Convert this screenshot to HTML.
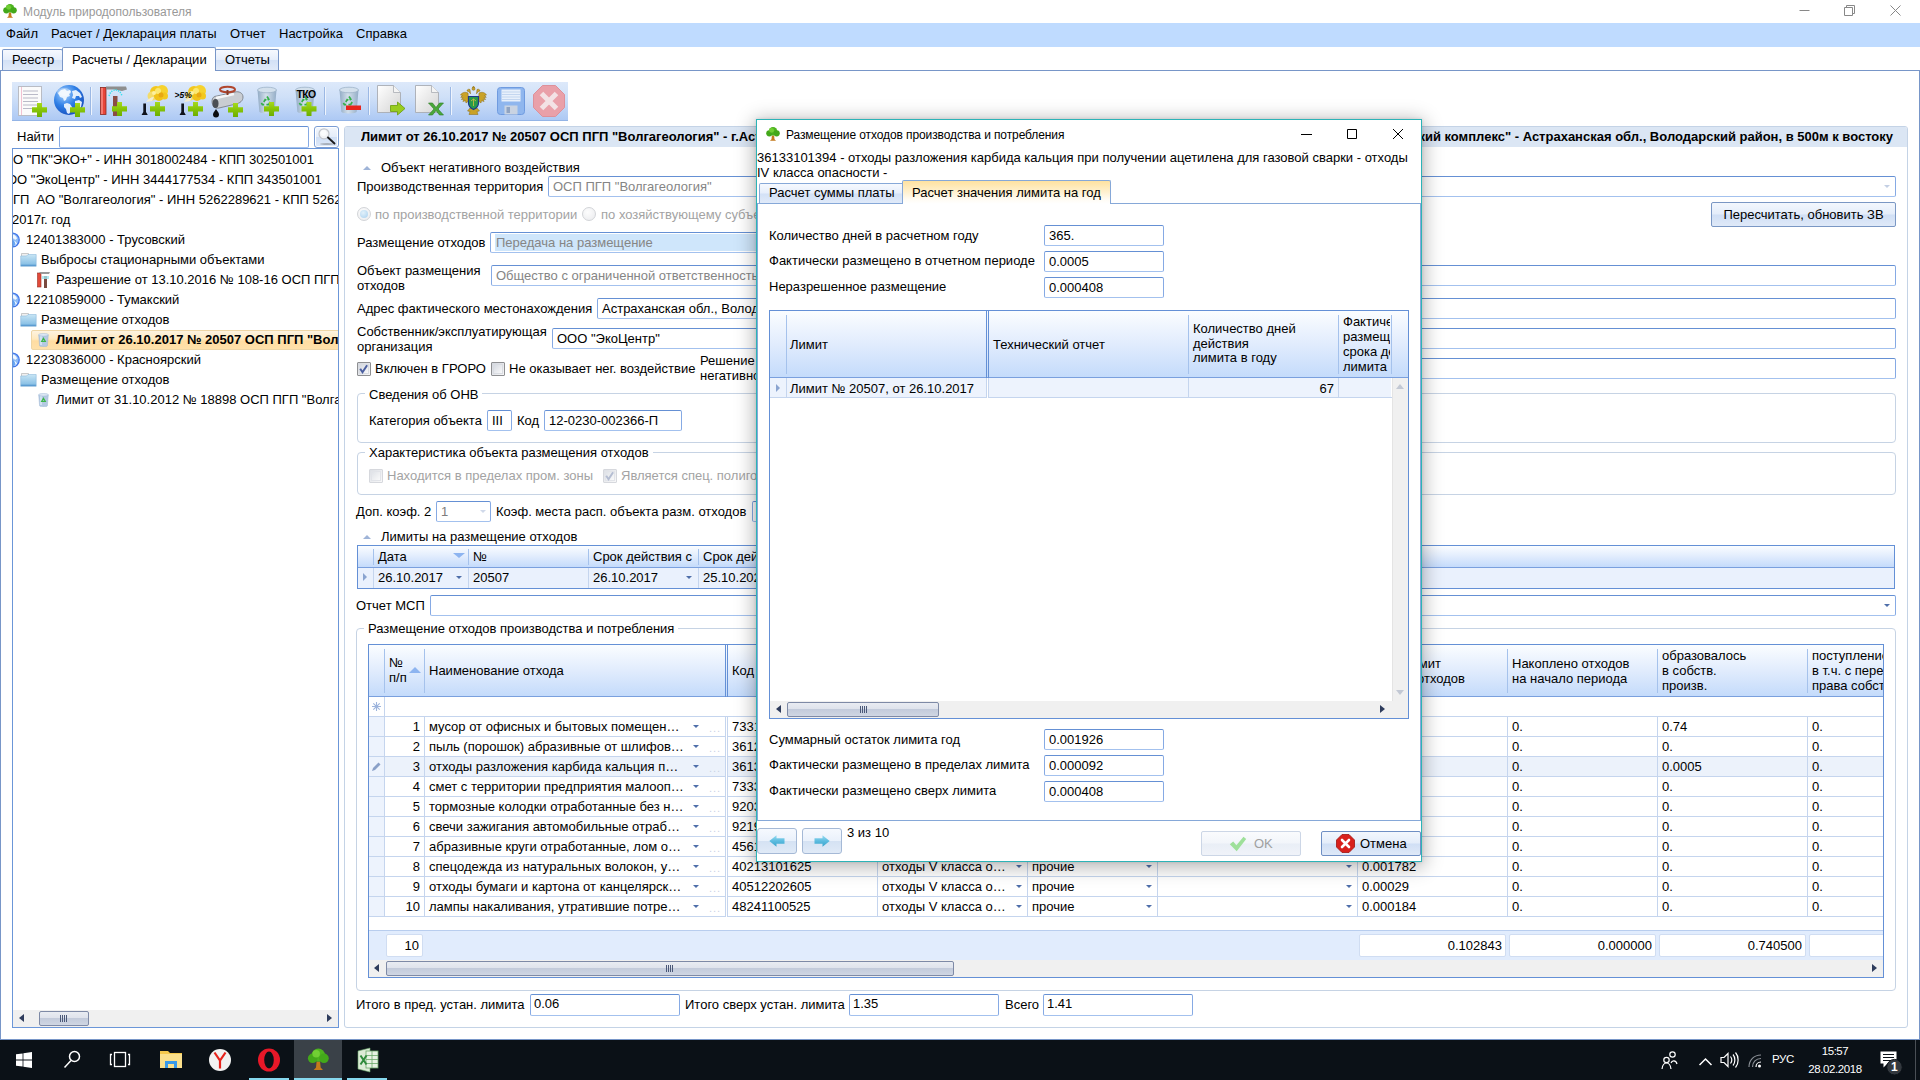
<!DOCTYPE html><html lang="ru"><head><meta charset="utf-8"><title>Модуль природопользователя</title><style>
*{box-sizing:border-box;margin:0;padding:0}
html,body{width:1920px;height:1080px;overflow:hidden;background:#fff}
body{font-family:"Liberation Sans",sans-serif;font-size:13px;color:#000;position:relative;line-height:15px}
.a{position:absolute;white-space:nowrap}
.t{position:absolute;white-space:nowrap;line-height:15px}
.g{color:#a3a3a3}.g2{color:#858585}
.in{position:absolute;height:21px;border:1px solid #86aae4;border-top-color:#6590d4;border-bottom-color:#a3c1ee;border-radius:2px;background:#fff;white-space:nowrap;overflow:hidden;padding:2px 0 0 4px;line-height:15px}
.grp{position:absolute;border:1px solid #c6d3e4;border-radius:4px}
.grp>span{position:absolute;top:-8px;left:7px;background:#fff;padding:0 4px;line-height:15px;white-space:nowrap}
.hdr{position:absolute;background:linear-gradient(#fbfdff 0%,#e1ecfd 50%,#c4dbfb 100%);border-bottom:1px solid #7aa0de}
.vs{position:absolute;width:1px;background:#a5c2ec}
.hl{position:absolute;height:1px;background:#c5d5ee}
.vl{position:absolute;width:1px;background:#c5d5ee}
.btn{position:absolute;border:1px solid #7a97c4;border-radius:2px;background:linear-gradient(#f3f7fd 0%,#e4edfa 48%,#d0dff5 52%,#dfe9f8 100%);text-align:center}
.cb{position:absolute;width:14px;height:14px;border:1px solid #8e8f92;background:linear-gradient(135deg,#d2d6dd,#f6f6f7);border-radius:1px}
.cb:after{content:"";position:absolute;left:1px;top:1px;right:1px;bottom:1px;border:1px solid #d9dce2;background:linear-gradient(135deg,#d6dae1,#f8f8f9)}
.cb.dis{border-color:#c9ccd2;opacity:.75}
.tri{position:absolute;width:0;height:0;border-left:4px solid transparent;border-right:4px solid transparent}
.dd{position:absolute;width:0;height:0;border-left:3px solid transparent;border-right:3px solid transparent;border-top:3px solid #4f6faa}
</style></head><body>
<div class="a" style="left:0px;top:0px;width:1920px;height:23px;background:#fff"></div>
<svg class="a" style="left:2px;top:3px" width="16" height="16" viewBox="0 0 17 17"><path d="M7.3 10h2.4l.4 4.2 1.6 1.6H5.3l1.6-1.6z" fill="#c47a1c"/><circle cx="8.5" cy="5.6" r="4.6" fill="#4db31f"/><circle cx="4.6" cy="7.8" r="3.3" fill="#43a81a"/><circle cx="12.4" cy="7.8" r="3.3" fill="#43a81a"/><circle cx="7" cy="4.6" r="2.6" fill="#7ad63a" opacity=".8"/></svg>
<div class="t" style="left:23px;top:5px;font-size:12px;color:#999">Модуль природопользователя</div>
<svg class="a" style="left:1790px;top:0" width="120" height="22" viewBox="0 0 120 22"><g stroke="#888" stroke-width="1" fill="none"><path d="M9.5 10.5h10"/><path d="M54.5 7.5h8v8h-8zM56.5 7.5v-2h8v8h-2"/><path d="M100.5 5.5l10 10M110.5 5.5l-10 10"/></g></svg>
<div class="a" style="left:0px;top:23px;width:1920px;height:24px;background:#bfdbff"></div>
<div class="t" style="left:6px;top:26px;">Файл</div>
<div class="t" style="left:51px;top:26px;">Расчет / Декларация платы</div>
<div class="t" style="left:230px;top:26px;">Отчет</div>
<div class="t" style="left:279px;top:26px;">Настройка</div>
<div class="t" style="left:356px;top:26px;">Справка</div>
<div class="a" style="left:0px;top:70px;width:1920px;height:970px;border:1px solid #7896c8;background:#fff"></div>
<div class="a" style="left:2px;top:49px;width:61px;height:21px;background:linear-gradient(#f6f9fe 0%,#e6eefb 48%,#d3e1f6 52%,#e0eaf9 100%);border:1px solid #7896c8;border-bottom:none;border-radius:2px 2px 0 0"></div>
<div class="a" style="left:215px;top:49px;width:64px;height:21px;background:linear-gradient(#f6f9fe 0%,#e6eefb 48%,#d3e1f6 52%,#e0eaf9 100%);border:1px solid #7896c8;border-bottom:none;border-radius:2px 2px 0 0"></div>
<div class="a" style="left:62px;top:47px;width:154px;height:24px;background:#fff;border:1px solid #7896c8;border-bottom:none;border-radius:2px 2px 0 0"></div>
<div class="t" style="left:12px;top:52px;">Реестр</div>
<div class="t" style="left:72px;top:52px;">Расчеты / Декларации</div>
<div class="t" style="left:225px;top:52px;">Отчеты</div>
<div class="a" style="left:12px;top:82px;width:556px;height:39px;background:linear-gradient(#dde9fa 0%,#cfe0f8 40%,#adc9f4 100%);border-bottom:1px solid #93b4e6"></div>
<svg class="a" style="left:12px;top:82px" width="556" height="39" viewBox="12 82 556 39"><defs><linearGradient id="gb2" x1="0" y1="0" x2="1" y2="0"><stop offset="0" stop-color="#8ea8c2"/><stop offset=".45" stop-color="#d3dfea"/><stop offset="1" stop-color="#90aac4"/></linearGradient><linearGradient id="gp" x1="0" y1="0" x2="0" y2="1"><stop offset="0" stop-color="#a6d91c"/><stop offset=".5" stop-color="#86c408"/><stop offset="1" stop-color="#6cae00"/></linearGradient><linearGradient id="gb" x1="0" y1="0" x2="0" y2="1"><stop offset="0" stop-color="#cfe0f2"/><stop offset="1" stop-color="#8fb0d2"/></linearGradient><radialGradient id="gg" cx=".35" cy=".3" r=".8"><stop offset="0" stop-color="#a8d4ff"/><stop offset=".5" stop-color="#2f7fe6"/><stop offset="1" stop-color="#1448b8"/></radialGradient><linearGradient id="gd" x1="0" y1="0" x2="1" y2="1"><stop offset="0" stop-color="#ffffff"/><stop offset="1" stop-color="#d4d4d4"/></linearGradient></defs><path d="M90.5 87v28" stroke="#9bb8e4" stroke-width="1"/><path d="M91.5 87v28" stroke="#eef4fd" stroke-width="1"/><path d="M324.5 87v28" stroke="#9bb8e4" stroke-width="1"/><path d="M325.5 87v28" stroke="#eef4fd" stroke-width="1"/><path d="M368.5 87v28" stroke="#9bb8e4" stroke-width="1"/><path d="M369.5 87v28" stroke="#eef4fd" stroke-width="1"/><path d="M450.5 87v28" stroke="#9bb8e4" stroke-width="1"/><path d="M451.5 87v28" stroke="#eef4fd" stroke-width="1"/><rect x="18.5" y="86.500" width="23" height="29" fill="#fbfbfb" stroke="#b9bcc4" stroke-width="1"/><path d="M21.5 87v28" stroke="#f0b4c8" stroke-width=".8"/><path d="M23 91h15" stroke="#aab" stroke-width=".8"/><path d="M23 94.5h15" stroke="#aab" stroke-width=".8"/><path d="M23 98h15" stroke="#aab" stroke-width=".8"/><path d="M23 101.5h15" stroke="#aab" stroke-width=".8"/><path d="M23 105h15" stroke="#aab" stroke-width=".8"/><path d="M23 108.5h15" stroke="#aab" stroke-width=".8"/><path d="M37 103h5v4.300h5v5.200h-5v4.500h-5v-4.500h-5v-5.200h5z" fill="url(#gp)"/><circle cx="69" cy="100" r="15" fill="url(#gg)"/><path d="M58 93l3-3 4-1 2 2 3-1 1 2-2 2 1 2-3 1-1 3-2 1-1-3-3-1-1-2zM64 104l3-1 3 1 2 3-1 4-2 3-2-1-1-4-2-2zM72 91l4-1 4 3 2 4-2 1-1-2-3 0-1 3-3-1 1-3zM75 101l4-1 3 2-1 5-3 3-3-3z" fill="#f2f8fe" opacity=".92"/><ellipse cx="64" cy="92" rx="7" ry="4" fill="#fff" opacity=".35"/><path d="M75 103h5v4.300h5v5.200h-5v4.500h-5v-4.500h-5v-5.200h5z" fill="url(#gp)"/><rect x="100.5" y="87.500" width="5.500" height="27" fill="#e8453a" stroke="#8c2a22" stroke-width=".8"/><path d="M102 88v26" stroke="#ffb0a8" stroke-width="1"/><path d="M106 86.500h20l1 3-5 1.500-8-1.500h-8z" fill="#8e8e8e"/><rect x="113" y="96" width="4.500" height="20" fill="#8a4c44"/><path d="M109 96c1-4 4-6 6.500-6s5.500 2 6.500 6" fill="none" stroke="#32e0f0" stroke-width="1.500" stroke-dasharray="1.200 1.200"/><path d="M117 102h5v4.300h5v5.200h-5v4.500h-5v-4.500h-5v-5.200h5z" fill="url(#gp)"/><g transform="translate(0,0)"><circle cx="156" cy="92" r="6" fill="#f3c81e"/><circle cx="162" cy="91" r="6" fill="#f6d22e"/><circle cx="152" cy="96" r="4.500" fill="#f4dc6a"/><circle cx="159" cy="96" r="5" fill="#f0c21a"/><circle cx="164.500" cy="96" r="3.500" fill="#f3c81e"/><circle cx="158" cy="91" r="3" fill="#fbe872"/><circle cx="161" cy="95" r="2.500" fill="#e8a812"/><circle cx="154" cy="93" r="2" fill="#fdf0a0"/><path d="M146 102c2-3 5-5 8-5l-2 4c-2 0-4 1-6 1z" fill="#f2ecd2"/></g><path d="M143.300 103.500h2.700v8.500l1.800 3h-6.300l1.800-3z" fill="#10131c"/><path d="M155 102h5v4.300h5v5.200h-5v4.500h-5v-4.500h-5v-5.200h5z" fill="url(#gp)"/><g transform="translate(38,0)"><circle cx="156" cy="92" r="6" fill="#f3c81e"/><circle cx="162" cy="91" r="6" fill="#f6d22e"/><circle cx="152" cy="96" r="4.500" fill="#f4dc6a"/><circle cx="159" cy="96" r="5" fill="#f0c21a"/><circle cx="164.500" cy="96" r="3.500" fill="#f3c81e"/><circle cx="158" cy="91" r="3" fill="#fbe872"/><circle cx="161" cy="95" r="2.500" fill="#e8a812"/><circle cx="154" cy="93" r="2" fill="#fdf0a0"/><path d="M146 102c2-3 5-5 8-5l-2 4c-2 0-4 1-6 1z" fill="#f2ecd2"/></g><text x="174.500" y="97.500" font-family="Liberation Sans,sans-serif" font-size="8.500" font-weight="bold" font-style="italic" fill="#000">&gt;5%</text><path d="M181.300 103.500h2.700v8.500l1.800 3h-6.300l1.800-3z" fill="#10131c"/><path d="M193 102h5v4.300h5v5.200h-5v4.500h-5v-4.500h-5v-5.200h5z" fill="url(#gp)"/><path d="M212 101c0-3 2-5 5-5l18-4c4-1 8 1 8 5s-3 6-7 7l-17 4c-4 1-7-2-7-7z" fill="#c9cdd2" stroke="#70757c" stroke-width=".8"/><path d="M216 98l18-4" stroke="#f4f6f8" stroke-width="2.500"/><ellipse cx="215.500" cy="103.500" rx="3" ry="4.500" fill="#4a4e55"/><ellipse cx="227.500" cy="89.500" rx="7.500" ry="2.800" fill="none" stroke="#b0462e" stroke-width="2"/><path d="M227.500 90v5" stroke="#8a3a28" stroke-width="2"/><path d="M216 109c2 3 3 4 3 5.500a3 3 0 0 1-6 0c0-1.500 1-2.500 3-5.500z" fill="#0b0c10"/><path d="M233 103h5v4.300h5v5.200h-5v4.500h-5v-4.500h-5v-5.200h5z" fill="url(#gp)"/><path d="M257.5 90l1.800 21.500c0 2.600 15.400 2.600 15.400 0l1.800-21.500z" fill="url(#gb2)" opacity=".95"/><ellipse cx="267" cy="90" rx="9.500" ry="2.800" fill="#d3e0ec" stroke="#9db3c8" stroke-width=".8"/><path d="M267 96.500l1.800 2.800-1.200.7M270.2 102l-1.600 2.600h-2.200M263.8 102l1.400-2.400 1.200.6M264.2 104.600h-1.800l-1-1.800" fill="none" stroke="#35b04a" stroke-width="1.700"/><path d="M269 102h5v4.300h5v5.200h-5v4.500h-5v-4.500h-5v-5.200h5z" fill="url(#gp)"/><path d="M295.5 90l1.800 21.500c0 2.600 15.400 2.600 15.400 0l1.800-21.500z" fill="url(#gb2)" opacity=".95"/><ellipse cx="305" cy="90" rx="9.500" ry="2.800" fill="#d3e0ec" stroke="#9db3c8" stroke-width=".8"/><path d="M305 96.500l1.800 2.800-1.200.7M308.2 102l-1.600 2.600h-2.200M301.8 102l1.400-2.400 1.200.6M302.2 104.600h-1.800l-1-1.800" fill="none" stroke="#35b04a" stroke-width="1.700"/><path d="M306.5 102h5v4.300h5v5.200h-5v4.500h-5v-4.500h-5v-5.200h5z" fill="url(#gp)"/><text x="296.500" y="98" font-family="Liberation Sans,sans-serif" font-size="10.500" font-weight="bold" fill="#000" letter-spacing="-.7">ТКО</text><path d="M339.5 90l1.800 21.500c0 2.600 15.400 2.600 15.400 0l1.800-21.500z" fill="url(#gb2)" opacity=".95"/><ellipse cx="349" cy="90" rx="9.500" ry="2.800" fill="#d3e0ec" stroke="#9db3c8" stroke-width=".8"/><path d="M349 96.500l1.800 2.800-1.200.7M352.2 102l-1.600 2.600h-2.200M345.8 102l1.400-2.400 1.200.6M346.2 104.600h-1.800l-1-1.800" fill="none" stroke="#35b04a" stroke-width="1.700"/><rect x="346" y="105.500" width="15" height="4.500" fill="#e8251c"/><path d="M377.5 85.500h16l7 7v20h-23z" fill="url(#gd)" stroke="#a8acb2" stroke-width=".9"/><path d="M393.5 85.500v7h7" fill="#f4f4f4" stroke="#a8acb2" stroke-width=".8"/><path d="M390.500 105.500h7v-3.500l7.500 6.500-7.500 6.500v-3.500h-7z" fill="#98cc1e" stroke="#6a9c0a" stroke-width=".8"/><path d="M415.5 85.500h16l7 7v20h-23z" fill="url(#gd)" stroke="#a8acb2" stroke-width=".9"/><path d="M431.5 85.500v7h7" fill="#f4f4f4" stroke="#a8acb2" stroke-width=".8"/><path d="M428.500 103l4 0 3.500 4.500 3.500-4.500h4l-5.500 6 5.500 6h-4l-3.500-4.500-3.500 4.500h-4l5.500-6z" fill="#4aa83a" stroke="#2a7a22" stroke-width=".6"/><g fill="#c9a227" stroke="#8a6a10" stroke-width=".5"><path d="M473.500 86l1.200 1.800h-2.400z"/><circle cx="473.500" cy="88.800" r="1.500"/><path d="M470 89.500c-1.500-.8-3 0-3 1.500l2 .8 1.500 2zM477 89.500c1.500-.8 3 0 3 1.500l-2 .8-1.500 2z"/><path d="M468 93c-3-1.500-6-.5-7.500 2l2 .5-1.800 1.800 2.200.2-1.500 2 2.500-.2-1 2.200 2.600-.8.500 2.300 2.500-2zM479 93c3-1.500 6-.5 7.500 2l-2 .5 1.800 1.800-2.200.2 1.500 2-2.500-.2 1 2.200-2.600-.8-.5 2.300-2.500-2z"/><path d="M470 108l-2.500 3 2.500.5-1 3h9l-1-3 2.500-.5-2.500-3z"/></g><path d="M468.500 96.500h10v6.500c0 3-2.200 5.200-5 6.500-2.800-1.300-5-3.500-5-6.500z" fill="#2a9a48" stroke="#1b3a8a" stroke-width="1.200"/><path d="M473.500 99v7M471 101l2.500-2 2.500 2" stroke="#d8c040" stroke-width=".8" fill="none"/><rect x="497.500" y="87.500" width="27" height="27" rx="3" fill="#8fb6ee" stroke="#6f9be0" stroke-width="1"/><rect x="501.500" y="89.500" width="19" height="12" fill="#e8f0fb"/><path d="M502 92h18M502 94.500h18M502 97h18M502 99.500h18" stroke="#b9cfee" stroke-width=".8"/><rect x="504.500" y="105.500" width="13" height="9" fill="#c9d3e2"/><rect x="506.500" y="107" width="3.500" height="6" fill="#8fa3c2"/><path d="M542.500 85.500h13l9 9v13l-9 9h-13l-9-9v-13z" fill="#e9a0a9" stroke="#dd909a" stroke-width="1"/><path d="M541.500 93.500l15 15M556.500 93.500l-15 15" stroke="#f3e2e5" stroke-width="5"/></svg>
<div class="t" style="left:17px;top:129px;">Найти</div>
<div class="in" style="left:59px;top:126px;width:250px;height:22px;"></div>
<div class="btn" style="left:314px;top:126px;width:25px;height:22px;border-color:#7b9dd4;border-radius:3px;box-shadow:inset 0 0 0 1px #fff"></div>
<svg class="a" style="left:317px;top:127px" width="20" height="19" viewBox="0 0 20 19"><ellipse cx="10" cy="17" rx="7" ry=".8" fill="#555" opacity=".5"/><circle cx="7" cy="6.800" r="5" fill="#f2f3f5" stroke="#c2c5ca" stroke-width="1.200"/><circle cx="6.500" cy="6" r="3" fill="#fff" opacity=".7"/><path d="M11 10.500l6.500 6" stroke="#1c1c1c" stroke-width="1.900" stroke-linecap="round"/></svg>
<div class="a" style="left:12px;top:148px;width:327px;height:880px;border:1px solid #6b96d8;background:#fff;overflow:hidden">
<div class="t" style="left:0px;top:3px;">О "ПК"ЭКО+" - ИНН 3018002484 - КПП 302501001</div>
<div class="t" style="left:-6px;top:23px;">ОО "ЭкоЦентр" - ИНН 3444177534 - КПП 343501001</div>
<div class="t" style="left:0px;top:43px;">ГП&nbsp; АО "Волгагеология" - ИНН 5262289621 - КПП 5262</div>
<div class="t" style="left:-1px;top:63px;">2017г. год</div>
<svg class="a" style="left:-9px;top:83px" width="16" height="16" viewBox="0 0 16 16"><circle cx="8.2" cy="8" r="7" fill="#8ebcf6" stroke="#3f74ea" stroke-width="1.300"/><path d="M9 2.500c2 .5 3.500 2 4 4l-2 1.500-1-1.500-2 .5-.5-2zM9.500 9l2 .5 1.500 2-2 2.500-2-1.500z" fill="#f4f9ff"/><path d="M8.500 8c2 1 3 3 3 5l-2 1c-1-2-1-4-1-6z" fill="#2f86f0" opacity=".7"/></svg>
<div class="t" style="left:13px;top:83px;">12401383000 - Трусовский</div>
<svg class="a" style="left:7px;top:103px" width="17" height="15" viewBox="0 0 17 15"><defs><linearGradient id="fg5" x1="0" y1="0" x2="0" y2="1"><stop offset="0" stop-color="#c9e6f5"/><stop offset=".8" stop-color="#8cc2e6"/><stop offset="1" stop-color="#3f87c6"/></linearGradient></defs><path d="M1.500 1.500h7v3h-7z" fill="#f0f0f0" stroke="#b4b4b4" stroke-width=".7"/><path d="M.700 4l5.800 0 1.500-1.500h8.200v11.800H.7z" fill="url(#fg5)" stroke="#7fb0d8" stroke-width=".5"/></svg>
<div class="t" style="left:28px;top:103px;">Выбросы стационарными объектами</div>
<svg class="a" style="left:23px;top:122px" width="16" height="17" viewBox="0 0 16 17"><rect x="1.5" y="2" width="3.5" height="14" fill="#e24a3a" stroke="#9c2d22" stroke-width=".6"/><rect x="8" y="5" width="3" height="12" fill="#7a4a40"/><path d="M3 1h11l-1 2H5z" fill="#999"/><path d="M6 5h7v3H6z" fill="#9fe4ee" opacity=".8"/></svg>
<div class="t" style="left:43px;top:123px;">Разрешение от 13.10.2016 № 108-16 ОСП ПГП</div>
<svg class="a" style="left:-9px;top:143px" width="16" height="16" viewBox="0 0 16 16"><circle cx="8.2" cy="8" r="7" fill="#8ebcf6" stroke="#3f74ea" stroke-width="1.300"/><path d="M9 2.500c2 .5 3.500 2 4 4l-2 1.500-1-1.500-2 .5-.5-2zM9.500 9l2 .5 1.500 2-2 2.500-2-1.500z" fill="#f4f9ff"/><path d="M8.500 8c2 1 3 3 3 5l-2 1c-1-2-1-4-1-6z" fill="#2f86f0" opacity=".7"/></svg>
<div class="t" style="left:13px;top:143px;">12210859000 - Тумакский</div>
<svg class="a" style="left:7px;top:163px" width="17" height="15" viewBox="0 0 17 15"><defs><linearGradient id="fg8" x1="0" y1="0" x2="0" y2="1"><stop offset="0" stop-color="#c9e6f5"/><stop offset=".8" stop-color="#8cc2e6"/><stop offset="1" stop-color="#3f87c6"/></linearGradient></defs><path d="M1.500 1.500h7v3h-7z" fill="#f0f0f0" stroke="#b4b4b4" stroke-width=".7"/><path d="M.700 4l5.800 0 1.500-1.500h8.200v11.800H.7z" fill="url(#fg8)" stroke="#7fb0d8" stroke-width=".5"/></svg>
<div class="t" style="left:28px;top:163px;">Размещение отходов</div>
<div class="a" style="left:18px;top:181px;width:320px;height:20px;border:1px solid #eed6a6;border-radius:2px;background:linear-gradient(#fdf3e0 0%,#ffe9be 45%,#ffdda2 55%,#ffe1aa 100%)"></div>
<svg class="a" style="left:25px;top:184px" width="11" height="14" viewBox="0 0 11 14"><path d="M.700 1.800h9.600l-.9 11c0 1.200-7.800 1.200-7.800 0z" fill="#b4c9e2" stroke="#9db6d4" stroke-width=".5"/><path d="M3 3v9" stroke="#dbe7f4" stroke-width="1.500"/><ellipse cx="5.500" cy="1.800" rx="4.800" ry="1.300" fill="#dde8f4" stroke="#9db6d4" stroke-width=".5"/><path d="M5.500 5.200l1.900 3.200h-3.800z" fill="none" stroke="#3db64a" stroke-width="1.100"/></svg>
<div class="t" style="left:43px;top:183px;font-weight:bold;">Лимит от 26.10.2017 № 20507 ОСП ПГП "Волга</div>
<svg class="a" style="left:-9px;top:203px" width="16" height="16" viewBox="0 0 16 16"><circle cx="8.2" cy="8" r="7" fill="#8ebcf6" stroke="#3f74ea" stroke-width="1.300"/><path d="M9 2.500c2 .5 3.500 2 4 4l-2 1.500-1-1.500-2 .5-.5-2zM9.500 9l2 .5 1.500 2-2 2.500-2-1.500z" fill="#f4f9ff"/><path d="M8.500 8c2 1 3 3 3 5l-2 1c-1-2-1-4-1-6z" fill="#2f86f0" opacity=".7"/></svg>
<div class="t" style="left:13px;top:203px;">12230836000 - Красноярский</div>
<svg class="a" style="left:7px;top:223px" width="17" height="15" viewBox="0 0 17 15"><defs><linearGradient id="fg11" x1="0" y1="0" x2="0" y2="1"><stop offset="0" stop-color="#c9e6f5"/><stop offset=".8" stop-color="#8cc2e6"/><stop offset="1" stop-color="#3f87c6"/></linearGradient></defs><path d="M1.500 1.500h7v3h-7z" fill="#f0f0f0" stroke="#b4b4b4" stroke-width=".7"/><path d="M.700 4l5.800 0 1.500-1.500h8.200v11.800H.7z" fill="url(#fg11)" stroke="#7fb0d8" stroke-width=".5"/></svg>
<div class="t" style="left:28px;top:223px;">Размещение отходов</div>
<svg class="a" style="left:25px;top:244px" width="11" height="14" viewBox="0 0 11 14"><path d="M.700 1.800h9.600l-.9 11c0 1.200-7.800 1.200-7.800 0z" fill="#b4c9e2" stroke="#9db6d4" stroke-width=".5"/><path d="M3 3v9" stroke="#dbe7f4" stroke-width="1.500"/><ellipse cx="5.500" cy="1.800" rx="4.800" ry="1.300" fill="#dde8f4" stroke="#9db6d4" stroke-width=".5"/><path d="M5.500 5.200l1.900 3.200h-3.800z" fill="none" stroke="#3db64a" stroke-width="1.100"/></svg>
<div class="t" style="left:43px;top:243px;">Лимит от 31.10.2012 № 18898 ОСП ПГП "Волга</div>
<div class="a" style="left:0;top:861px;width:325px;height:17px;background:#f0f0f0"></div>
<div class="a" style="left:26px;top:862px;width:50px;height:15px;border:1px solid #7e8aa6;border-radius:2px;background:linear-gradient(#e9ecf2 0%,#dfe3ec 45%,#c3cbdb 50%,#cfd6e3 100%)"></div>
<div class="a" style="left:47px;top:866px;width:7px;height:7px;background:repeating-linear-gradient(90deg,#4a5878 0 1px,transparent 1px 2px)"></div>
<div class="a" style="left:6px;top:865px;width:0;height:0;border-top:4px solid transparent;border-bottom:4px solid transparent;border-right:5px solid #2e3c5c"></div>
<div class="a" style="left:314px;top:865px;width:0;height:0;border-top:4px solid transparent;border-bottom:4px solid transparent;border-left:5px solid #2e3c5c"></div>
</div>
<div class="a" style="left:344px;top:126px;width:1564px;height:902px;border:1px solid #c4d3e6;border-radius:3px;background:#fff"></div>
<div class="a" style="left:345px;top:127px;width:1562px;height:20px;background:#dbe6f4;border-radius:2px 2px 0 0"></div>
<div class="t" style="left:361px;top:129px;font-weight:bold;width:420px;overflow:hidden">Лимит от 26.10.2017 № 20507 ОСП ПГП "Волгагеология" - г.Астрахань</div>
<div class="t" style="right:27px;top:129px;font-weight:bold">"Рыбопромышленный технический комплекс" - Астраханская обл., Володарский район, в 500м к востоку</div>
<div class="tri" style="left:363px;top:166px;border-bottom:4px solid #9fb4d8"></div>
<div class="t" style="left:381px;top:160px;">Объект негативного воздействия</div>
<div class="t" style="left:357px;top:179px;">Производственная территория</div>
<div class="in" style="left:548px;top:176px;width:1348px;height:21px;"><span class="g2">ОСП ПГП "Волгагеология"</span></div>
<div class="dd" style="left:1884px;top:185px;border-top-color:#c3cfe4"></div>
<div class="a" style="left:357px;top:207px;width:14px;height:14px;border-radius:50%;border:1px solid #d2d4d8;background:radial-gradient(circle at 40% 35%,#fdfdfd,#e9eaed)"></div><div class="a" style="left:360px;top:210px;width:8px;height:8px;border-radius:50%;background:radial-gradient(circle at 40% 35%,#e2f1fb,#a8d0ee)"></div>
<div class="t g" style="left:375px;top:207px;">по производственной территории</div>
<div class="a" style="left:582px;top:207px;width:14px;height:14px;border-radius:50%;border:1px solid #d2d4d8;background:radial-gradient(circle at 40% 35%,#fdfdfd,#e9eaed)"></div>
<div class="t g" style="left:601px;top:207px;">по хозяйствующему субъекту</div>
<div class="btn" style="left:1711px;top:202px;width:185px;height:25px;padding-top:4px">Пересчитать, обновить ЗВ</div>
<div class="t" style="left:357px;top:235px;">Размещение отходов</div>
<div class="in" style="left:490px;top:232px;width:500px;height:21px;"><span class="g2" style="background:#cfe6fb;display:inline-block;width:480px;height:17px;padding-left:1px;margin-top:-1px;padding-top:1px">Передача на размещение</span></div>
<div class="t" style="left:357px;top:263px;">Объект размещения<br>отходов</div>
<div class="in" style="left:491px;top:265px;width:1405px;height:21px;"><span class="g2">Общество с ограниченной ответственностью "ЭкоЦентр"</span></div>
<div class="t" style="left:357px;top:301px;">Адрес фактического местонахождения</div>
<div class="in" style="left:597px;top:298px;width:1299px;height:21px;">Астраханская обл., Володарский район</div>
<div class="t" style="left:357px;top:324px;">Собственник/эксплуатирующая<br>организация</div>
<div class="in" style="left:552px;top:328px;width:1344px;height:21px;">ООО "ЭкоЦентр"</div>
<div class="cb" style="left:357px;top:362px"></div><svg class="a" style="left:357px;top:362px" width="14" height="14" viewBox="0 0 14 14"><path d="M3.200 6.800l2.300 3.400 4.600-7" fill="none" stroke="#4b5fa0" stroke-width="2"/></svg>
<div class="t" style="left:375px;top:361px;">Включен в ГРОРО</div>
<div class="cb" style="left:491px;top:362px"></div>
<div class="t" style="left:509px;top:361px;">Не оказывает нег. воздействие</div>
<div class="t" style="left:700px;top:353px;">Решение об отсутствии<br>негативного воздействия</div>
<div class="in" style="left:860px;top:358px;width:1036px;height:21px;"></div>
<div class="grp" style="left:357px;top:393px;width:1539px;height:50px"><span style="top:-7px">Сведения об ОНВ</span></div>
<div class="t" style="left:369px;top:413px;">Категория объекта</div>
<div class="in" style="left:487px;top:410px;width:25px;height:21px;">III</div>
<div class="t" style="left:517px;top:413px;">Код</div>
<div class="in" style="left:544px;top:410px;width:138px;height:21px;">12-0230-002366-П</div>
<div class="grp" style="left:357px;top:452px;width:1539px;height:43px"><span>Характеристика объекта размещения отходов</span></div>
<div class="cb dis" style="left:369px;top:469px"></div>
<div class="t g" style="left:387px;top:468px;">Находится в пределах пром. зоны</div>
<div class="cb dis" style="left:603px;top:469px"></div><svg class="a" style="left:603px;top:469px" width="14" height="14" viewBox="0 0 14 14"><path d="M3.200 6.800l2.300 3.400 4.600-7" fill="none" stroke="#b4bdd2" stroke-width="2"/></svg>
<div class="t g" style="left:621px;top:468px;">Является спец. полигоном</div>
<div class="t" style="left:356px;top:504px;">Доп. коэф. 2</div>
<div class="in" style="left:436px;top:501px;width:55px;height:21px;"><span style="color:#7d7d7d">1</span></div>
<div class="dd" style="left:480px;top:510px;border-top-color:#d0d9ea"></div>
<div class="t" style="left:496px;top:504px;">Коэф. места расп. объекта разм. отходов</div>
<div class="in" style="left:752px;top:501px;width:60px;height:21px;"></div>
<div class="tri" style="left:363px;top:535px;border-bottom:4px solid #9fb4d8"></div>
<div class="t" style="left:381px;top:529px;">Лимиты на размещение отходов</div>
<div class="a" style="left:357px;top:545px;width:1538px;height:44px;border:1px solid #6490d6;background:#eaf1fd"></div>
<div class="hdr" style="left:358px;top:546px;width:1536px;height:22px"></div>
<div class="vs" style="left:373px;top:549px;height:16px"></div>
<div class="vl" style="left:373px;top:568px;height:20px"></div>
<div class="vs" style="left:468px;top:549px;height:16px"></div>
<div class="vl" style="left:468px;top:568px;height:20px"></div>
<div class="vs" style="left:588px;top:549px;height:16px"></div>
<div class="vl" style="left:588px;top:568px;height:20px"></div>
<div class="vs" style="left:698px;top:549px;height:16px"></div>
<div class="vl" style="left:698px;top:568px;height:20px"></div>
<div class="t" style="left:378px;top:549px;">Дата</div>
<div class="t" style="left:473px;top:549px;">№</div>
<div class="t" style="left:593px;top:549px;">Срок действия с</div>
<div class="t" style="left:703px;top:549px;">Срок действия по</div>
<div class="tri" style="left:453px;top:553px;border-top:5px solid #8db4f0;border-left-width:6px;border-right-width:6px"></div>
<div class="t" style="left:378px;top:570px;">26.10.2017</div>
<div class="t" style="left:473px;top:570px;">20507</div>
<div class="t" style="left:593px;top:570px;">26.10.2017</div>
<div class="t" style="left:703px;top:570px;">25.10.2022</div>
<div class="dd" style="left:456px;top:576px"></div><div class="dd" style="left:686px;top:576px"></div>
<div class="a" style="left:363px;top:573px;width:0;height:0;border-top:4px solid transparent;border-bottom:4px solid transparent;border-left:4px solid #8aa4d0"></div>
<div class="t" style="left:356px;top:598px;">Отчет МСП</div>
<div class="in" style="left:430px;top:595px;width:1466px;height:21px;"></div>
<div class="dd" style="left:1884px;top:604px"></div>
<div class="t" style="left:356px;top:997px;">Итого в пред. устан. лимита</div>
<div class="in" style="left:530px;top:994px;width:150px;height:22px;padding-top:1px;padding-left:3px">0.06</div>
<div class="t" style="left:685px;top:997px;">Итого сверх устан. лимита</div>
<div class="in" style="left:849px;top:994px;width:150px;height:22px;padding-top:1px;padding-left:3px">1.35</div>
<div class="t" style="left:1005px;top:997px;">Всего</div>
<div class="in" style="left:1043px;top:994px;width:150px;height:22px;padding-top:1px;padding-left:3px">1.41</div>
<div class="grp" style="left:356px;top:628px;width:1540px;height:363px"><span style="left:7px">Размещение отходов производства и потребления</span></div>
<div class="a" style="left:368px;top:644px;width:1516px;height:334px;border:1px solid #6490d6;background:#fff;overflow:hidden">
<div class="hdr" style="left:0;top:0;width:1514px;height:52px"></div>
<div class="vs" style="left:15px;top:4px;height:44px"></div>
<div class="vs" style="left:55px;top:4px;height:44px"></div>
<div class="vs" style="left:508px;top:4px;height:44px"></div>
<div class="vs" style="left:658px;top:4px;height:44px"></div>
<div class="vs" style="left:788px;top:4px;height:44px"></div>
<div class="vs" style="left:988px;top:4px;height:44px"></div>
<div class="vs" style="left:1138px;top:4px;height:44px"></div>
<div class="vs" style="left:1288px;top:4px;height:44px"></div>
<div class="vs" style="left:1438px;top:4px;height:44px"></div>
<div class="a" style="left:356px;top:0;width:3px;height:52px;border-left:1px solid #6490d6;border-right:1px solid #6490d6"></div>
<div class="t" style="left:20px;top:10px">№<br>п/п</div>
<div class="tri" style="left:40px;top:22px;border-bottom:6px solid #8db4f0;border-left-width:6px;border-right-width:6px"></div>
<div class="t" style="left:60px;top:18px">Наименование отхода</div>
<div class="t" style="left:363px;top:18px">Код отхода</div>
<div class="t" style="left:513px;top:18px">Класс опасности</div>
<div class="t" style="left:663px;top:18px">Вид отхода</div>
<div class="t" style="left:793px;top:18px">Лимит</div>
<div class="t" style="left:871px;width:225px;top:11px;text-align:right">Годовой лимит<span style="display:inline-block;width:24px"></span><br>размещения отходов</div>
<div class="t" style="left:1143px;top:11px">Накоплено отходов<br>на начало периода</div>
<div class="t" style="left:1293px;top:3px">образовалось<br>в собств.<br>произв.</div>
<div class="t" style="left:1443px;top:3px">поступление отходов<br>в т.ч. с переходом<br>права собственности</div>
<div class="hl" style="left:0;top:71px;width:1514px"></div>
<div class="vl" style="left:15px;top:52px;height:20px"></div>
<svg class="a" style="left:3px;top:57px" width="9" height="9" viewBox="0 0 9 9"><path d="M4.500 0v9M0 4.500h9M1.300 1.300l6.400 6.400M7.700 1.300l-6.400 6.400" stroke="#9db4dc" stroke-width="1.100"/></svg>
<div class="a" style="left:0;top:72px;width:15px;height:19px;background:#edf3fd"></div>
<div class="hl" style="left:0;top:91px;width:1514px"></div>
<div class="t" style="left:15px;width:36px;text-align:right;top:74px">1</div>
<div class="t" style="left:60px;top:74px">мусор от офисных и бытовых помещен…</div>
<div class="dd" style="left:324px;top:80px"></div>
<div class="t" style="left:340px;top:76px;color:#c9d2e4;font-size:11px;letter-spacing:1px">...</div>
<div class="t" style="left:363px;top:74px">73310001724</div>
<div class="t" style="left:513px;top:74px">отходы IV класса …</div>
<div class="dd" style="left:647px;top:80px"></div>
<div class="t" style="left:663px;top:74px">прочие</div>
<div class="dd" style="left:777px;top:80px"></div>
<div class="dd" style="left:977px;top:80px"></div>
<div class="t" style="left:993px;top:74px">0.1</div>
<div class="t" style="left:1143px;top:74px">0.</div>
<div class="t" style="left:1293px;top:74px">0.74</div>
<div class="t" style="left:1443px;top:74px">0.</div>
<div class="a" style="left:0;top:92px;width:15px;height:19px;background:#edf3fd"></div>
<div class="hl" style="left:0;top:111px;width:1514px"></div>
<div class="t" style="left:15px;width:36px;text-align:right;top:94px">2</div>
<div class="t" style="left:60px;top:94px">пыль (порошок) абразивные от шлифов…</div>
<div class="dd" style="left:324px;top:100px"></div>
<div class="t" style="left:340px;top:96px;color:#c9d2e4;font-size:11px;letter-spacing:1px">...</div>
<div class="t" style="left:363px;top:94px">36122102424</div>
<div class="t" style="left:513px;top:94px">отходы IV класса …</div>
<div class="dd" style="left:647px;top:100px"></div>
<div class="t" style="left:663px;top:94px">прочие</div>
<div class="dd" style="left:777px;top:100px"></div>
<div class="dd" style="left:977px;top:100px"></div>
<div class="t" style="left:993px;top:94px">0.000069</div>
<div class="t" style="left:1143px;top:94px">0.</div>
<div class="t" style="left:1293px;top:94px">0.</div>
<div class="t" style="left:1443px;top:94px">0.</div>
<div class="a" style="left:0;top:112px;width:1514px;height:19px;background:#ecf2fb"></div>
<div class="a" style="left:0;top:112px;width:15px;height:19px;background:#edf3fd"></div>
<div class="hl" style="left:0;top:131px;width:1514px"></div>
<div class="t" style="left:15px;width:36px;text-align:right;top:114px">3</div>
<div class="t" style="left:60px;top:114px">отходы разложения карбида кальция п…</div>
<div class="dd" style="left:324px;top:120px"></div>
<div class="t" style="left:340px;top:116px;color:#c9d2e4;font-size:11px;letter-spacing:1px">...</div>
<div class="t" style="left:363px;top:114px">36133101394</div>
<div class="t" style="left:513px;top:114px">отходы IV класса …</div>
<div class="dd" style="left:647px;top:120px"></div>
<div class="t" style="left:663px;top:114px">прочие</div>
<div class="dd" style="left:777px;top:120px"></div>
<div class="dd" style="left:977px;top:120px"></div>
<div class="t" style="left:993px;top:114px">0.0005</div>
<div class="t" style="left:1143px;top:114px">0.</div>
<div class="t" style="left:1293px;top:114px">0.0005</div>
<div class="t" style="left:1443px;top:114px">0.</div>
<div class="a" style="left:0;top:132px;width:15px;height:19px;background:#edf3fd"></div>
<div class="hl" style="left:0;top:151px;width:1514px"></div>
<div class="t" style="left:15px;width:36px;text-align:right;top:134px">4</div>
<div class="t" style="left:60px;top:134px">смет с территории предприятия малооп…</div>
<div class="dd" style="left:324px;top:140px"></div>
<div class="t" style="left:340px;top:136px;color:#c9d2e4;font-size:11px;letter-spacing:1px">...</div>
<div class="t" style="left:363px;top:134px">73339001714</div>
<div class="t" style="left:513px;top:134px">отходы IV класса …</div>
<div class="dd" style="left:647px;top:140px"></div>
<div class="t" style="left:663px;top:134px">прочие</div>
<div class="dd" style="left:777px;top:140px"></div>
<div class="dd" style="left:977px;top:140px"></div>
<div class="t" style="left:993px;top:134px">0.0001</div>
<div class="t" style="left:1143px;top:134px">0.</div>
<div class="t" style="left:1293px;top:134px">0.</div>
<div class="t" style="left:1443px;top:134px">0.</div>
<div class="a" style="left:0;top:152px;width:15px;height:19px;background:#edf3fd"></div>
<div class="hl" style="left:0;top:171px;width:1514px"></div>
<div class="t" style="left:15px;width:36px;text-align:right;top:154px">5</div>
<div class="t" style="left:60px;top:154px">тормозные колодки отработанные без н…</div>
<div class="dd" style="left:324px;top:160px"></div>
<div class="t" style="left:340px;top:156px;color:#c9d2e4;font-size:11px;letter-spacing:1px">...</div>
<div class="t" style="left:363px;top:154px">92031001525</div>
<div class="t" style="left:513px;top:154px">отходы V класса о…</div>
<div class="dd" style="left:647px;top:160px"></div>
<div class="t" style="left:663px;top:154px">прочие</div>
<div class="dd" style="left:777px;top:160px"></div>
<div class="dd" style="left:977px;top:160px"></div>
<div class="t" style="left:993px;top:154px">0.0001</div>
<div class="t" style="left:1143px;top:154px">0.</div>
<div class="t" style="left:1293px;top:154px">0.</div>
<div class="t" style="left:1443px;top:154px">0.</div>
<div class="a" style="left:0;top:172px;width:15px;height:19px;background:#edf3fd"></div>
<div class="hl" style="left:0;top:191px;width:1514px"></div>
<div class="t" style="left:15px;width:36px;text-align:right;top:174px">6</div>
<div class="t" style="left:60px;top:174px">свечи зажигания автомобильные отраб…</div>
<div class="dd" style="left:324px;top:180px"></div>
<div class="t" style="left:340px;top:176px;color:#c9d2e4;font-size:11px;letter-spacing:1px">...</div>
<div class="t" style="left:363px;top:174px">92191001525</div>
<div class="t" style="left:513px;top:174px">отходы V класса о…</div>
<div class="dd" style="left:647px;top:180px"></div>
<div class="t" style="left:663px;top:174px">прочие</div>
<div class="dd" style="left:777px;top:180px"></div>
<div class="dd" style="left:977px;top:180px"></div>
<div class="t" style="left:993px;top:174px">0.0001</div>
<div class="t" style="left:1143px;top:174px">0.</div>
<div class="t" style="left:1293px;top:174px">0.</div>
<div class="t" style="left:1443px;top:174px">0.</div>
<div class="a" style="left:0;top:192px;width:15px;height:19px;background:#edf3fd"></div>
<div class="hl" style="left:0;top:211px;width:1514px"></div>
<div class="t" style="left:15px;width:36px;text-align:right;top:194px">7</div>
<div class="t" style="left:60px;top:194px">абразивные круги отработанные, лом о…</div>
<div class="dd" style="left:324px;top:200px"></div>
<div class="t" style="left:340px;top:196px;color:#c9d2e4;font-size:11px;letter-spacing:1px">...</div>
<div class="t" style="left:363px;top:194px">45610001515</div>
<div class="t" style="left:513px;top:194px">отходы V класса о…</div>
<div class="dd" style="left:647px;top:200px"></div>
<div class="t" style="left:663px;top:194px">прочие</div>
<div class="dd" style="left:777px;top:200px"></div>
<div class="dd" style="left:977px;top:200px"></div>
<div class="t" style="left:993px;top:194px">0.00012</div>
<div class="t" style="left:1143px;top:194px">0.</div>
<div class="t" style="left:1293px;top:194px">0.</div>
<div class="t" style="left:1443px;top:194px">0.</div>
<div class="a" style="left:0;top:212px;width:15px;height:19px;background:#edf3fd"></div>
<div class="hl" style="left:0;top:231px;width:1514px"></div>
<div class="t" style="left:15px;width:36px;text-align:right;top:214px">8</div>
<div class="t" style="left:60px;top:214px">спецодежда из натуральных волокон, у…</div>
<div class="dd" style="left:324px;top:220px"></div>
<div class="t" style="left:340px;top:216px;color:#c9d2e4;font-size:11px;letter-spacing:1px">...</div>
<div class="t" style="left:363px;top:214px">40213101625</div>
<div class="t" style="left:513px;top:214px">отходы V класса о…</div>
<div class="dd" style="left:647px;top:220px"></div>
<div class="t" style="left:663px;top:214px">прочие</div>
<div class="dd" style="left:777px;top:220px"></div>
<div class="dd" style="left:977px;top:220px"></div>
<div class="t" style="left:993px;top:214px">0.001782</div>
<div class="t" style="left:1143px;top:214px">0.</div>
<div class="t" style="left:1293px;top:214px">0.</div>
<div class="t" style="left:1443px;top:214px">0.</div>
<div class="a" style="left:0;top:232px;width:15px;height:19px;background:#edf3fd"></div>
<div class="hl" style="left:0;top:251px;width:1514px"></div>
<div class="t" style="left:15px;width:36px;text-align:right;top:234px">9</div>
<div class="t" style="left:60px;top:234px">отходы бумаги и картона от канцелярск…</div>
<div class="dd" style="left:324px;top:240px"></div>
<div class="t" style="left:340px;top:236px;color:#c9d2e4;font-size:11px;letter-spacing:1px">...</div>
<div class="t" style="left:363px;top:234px">40512202605</div>
<div class="t" style="left:513px;top:234px">отходы V класса о…</div>
<div class="dd" style="left:647px;top:240px"></div>
<div class="t" style="left:663px;top:234px">прочие</div>
<div class="dd" style="left:777px;top:240px"></div>
<div class="dd" style="left:977px;top:240px"></div>
<div class="t" style="left:993px;top:234px">0.00029</div>
<div class="t" style="left:1143px;top:234px">0.</div>
<div class="t" style="left:1293px;top:234px">0.</div>
<div class="t" style="left:1443px;top:234px">0.</div>
<div class="a" style="left:0;top:252px;width:15px;height:19px;background:#edf3fd"></div>
<div class="hl" style="left:0;top:271px;width:1514px"></div>
<div class="t" style="left:15px;width:36px;text-align:right;top:254px">10</div>
<div class="t" style="left:60px;top:254px">лампы накаливания, утратившие потре…</div>
<div class="dd" style="left:324px;top:260px"></div>
<div class="t" style="left:340px;top:256px;color:#c9d2e4;font-size:11px;letter-spacing:1px">...</div>
<div class="t" style="left:363px;top:254px">48241100525</div>
<div class="t" style="left:513px;top:254px">отходы V класса о…</div>
<div class="dd" style="left:647px;top:260px"></div>
<div class="t" style="left:663px;top:254px">прочие</div>
<div class="dd" style="left:777px;top:260px"></div>
<div class="dd" style="left:977px;top:260px"></div>
<div class="t" style="left:993px;top:254px">0.000184</div>
<div class="t" style="left:1143px;top:254px">0.</div>
<div class="t" style="left:1293px;top:254px">0.</div>
<div class="t" style="left:1443px;top:254px">0.</div>
<svg class="a" style="left:2px;top:116px" width="11" height="11" viewBox="0 0 11 11"><path d="M1 10l1-3 5.500-5.500 2 2L4 9z" fill="#8aa0c8"/></svg>
<div class="vl" style="left:15px;top:72px;height:200px"></div>
<div class="vl" style="left:55px;top:72px;height:200px"></div>
<div class="vl" style="left:508px;top:72px;height:200px"></div>
<div class="vl" style="left:658px;top:72px;height:200px"></div>
<div class="vl" style="left:788px;top:72px;height:200px"></div>
<div class="vl" style="left:988px;top:72px;height:200px"></div>
<div class="vl" style="left:1138px;top:72px;height:200px"></div>
<div class="vl" style="left:1288px;top:72px;height:200px"></div>
<div class="vl" style="left:1438px;top:72px;height:200px"></div>
<div class="a" style="left:356px;top:72px;width:3px;height:200px;border-left:1px solid #c5d5ee;border-right:1px solid #c5d5ee;background:#fff"></div>
<div class="a" style="left:0;top:285px;width:1514px;height:31px;background:#e1ecfd;border-top:1px solid #b8cdee"></div>
<div class="a" style="left:17px;top:289px;width:37px;height:23px;background:#fff;border:1px solid #d0ddf2;border-radius:2px;text-align:right;padding:3px 3px 0 0;line-height:15px">10</div>
<div class="a" style="left:990px;top:289px;width:147px;height:23px;background:#fff;border:1px solid #d0ddf2;border-radius:2px;text-align:right;padding:3px 3px 0 0;line-height:15px">0.102843</div>
<div class="a" style="left:1140px;top:289px;width:147px;height:23px;background:#fff;border:1px solid #d0ddf2;border-radius:2px;text-align:right;padding:3px 3px 0 0;line-height:15px">0.000000</div>
<div class="a" style="left:1290px;top:289px;width:147px;height:23px;background:#fff;border:1px solid #d0ddf2;border-radius:2px;text-align:right;padding:3px 3px 0 0;line-height:15px">0.740500</div>
<div class="a" style="left:1440px;top:289px;width:147px;height:23px;background:#fff;border:1px solid #d0ddf2;border-radius:2px;text-align:right;padding:3px 3px 0 0;line-height:15px"></div>
<div class="a" style="left:0;top:315px;width:1514px;height:18px;background:#f0f0f0"></div>
<div class="a" style="left:17px;top:316px;width:568px;height:15px;border:1px solid #7e8aa6;border-radius:2px;background:linear-gradient(#e9ecf2 0%,#dfe3ec 45%,#c3cbdb 50%,#cfd6e3 100%)"></div>
<div class="a" style="left:297px;top:320px;width:7px;height:7px;background:repeating-linear-gradient(90deg,#4a5878 0 1px,transparent 1px 2px)"></div>
<div class="a" style="left:5px;top:319px;width:0;height:0;border-top:4px solid transparent;border-bottom:4px solid transparent;border-right:5px solid #2e3c5c"></div>
<div class="a" style="left:1503px;top:319px;width:0;height:0;border-top:4px solid transparent;border-bottom:4px solid transparent;border-left:5px solid #2e3c5c"></div>
</div>
<div class="a" style="left:756px;top:119px;width:666px;height:743px;background:#fff;border:1px solid #2cb3b7;box-shadow:0 3px 18px 2px rgba(0,0,0,.30),0 0 3px rgba(0,0,0,.12)"></div>
<svg class="a" style="left:765px;top:126px" width="16" height="16" viewBox="0 0 17 17"><path d="M7.3 10h2.4l.4 4.2 1.6 1.6H5.3l1.6-1.6z" fill="#c47a1c"/><circle cx="8.5" cy="5.6" r="4.6" fill="#4db31f"/><circle cx="4.6" cy="7.8" r="3.3" fill="#43a81a"/><circle cx="12.4" cy="7.8" r="3.3" fill="#43a81a"/><circle cx="7" cy="4.6" r="2.6" fill="#7ad63a" opacity=".8"/></svg>
<div class="t" style="left:786px;top:128px;font-size:12px;letter-spacing:-.1px">Размещение отходов производства и потребления</div>
<svg class="a" style="left:1295px;top:124px" width="120" height="20" viewBox="0 0 120 20"><g stroke="#000" stroke-width="1" fill="none"><path d="M6 10.500h11"/><path d="M52.500 5.500h9v9h-9z"/><path d="M98 5l10 10M108 5l-10 10"/></g></svg>
<div class="t" style="left:757px;top:150px;">36133101394 - отходы разложения карбида кальция при получении ацетилена для газовой сварки - отходы</div>
<div class="t" style="left:757px;top:165px;">IV класса опасности -</div>
<div class="a" style="left:757px;top:203px;width:664px;height:618px;border:1px solid #86a8d8;background:#fff"></div>
<div class="a" style="left:759px;top:183px;width:145px;height:20px;background:linear-gradient(#f6f9fe 0%,#e6eefb 48%,#d3e1f6 52%,#e0eaf9 100%);border:1px solid #86a8d8;border-bottom:none;border-radius:2px 2px 0 0"></div>
<div class="a" style="left:902px;top:180px;width:209px;height:24px;background:linear-gradient(#ffe2a0 0%,#fff0cc 45%,#fffcf4 80%,#fff 100%);border:1px solid #86a8d8;border-bottom:none;border-radius:2px 2px 0 0"></div>
<div class="t" style="left:769px;top:185px;">Расчет суммы платы</div>
<div class="t" style="left:912px;top:185px;">Расчет значения лимита на год</div>
<div class="t" style="left:769px;top:228px;">Количество дней в расчетном году</div>
<div class="in" style="left:1044px;top:225px;width:120px;height:21px;">365.</div>
<div class="t" style="left:769px;top:253px;">Фактически размещено в отчетном периоде</div>
<div class="in" style="left:1044px;top:251px;width:120px;height:21px;">0.0005</div>
<div class="t" style="left:769px;top:279px;">Неразрешенное размещение</div>
<div class="in" style="left:1044px;top:277px;width:120px;height:21px;">0.000408</div>
<div class="t" style="left:769px;top:732px;">Суммарный остаток лимита год</div>
<div class="in" style="left:1044px;top:729px;width:120px;height:21px;">0.001926</div>
<div class="t" style="left:769px;top:757px;">Фактически размещено в пределах лимита</div>
<div class="in" style="left:1044px;top:755px;width:120px;height:21px;">0.000092</div>
<div class="t" style="left:769px;top:783px;">Фактически размещено сверх лимита</div>
<div class="in" style="left:1044px;top:781px;width:120px;height:21px;">0.000408</div>
<div class="a" style="left:769px;top:310px;width:640px;height:409px;border:1px solid #6490d6;background:#fff;overflow:hidden">
<div class="hdr" style="left:0;top:0;width:638px;height:67px"></div>
<div class="vs" style="left:16px;top:4px;height:59px"></div>
<div class="vs" style="left:418px;top:4px;height:59px"></div>
<div class="vs" style="left:568px;top:4px;height:59px"></div>
<div class="vs" style="left:621px;top:4px;height:59px"></div>
<div class="a" style="left:216px;top:0;width:3px;height:67px;border-left:1px solid #6490d6;border-right:1px solid #6490d6"></div>
<div class="t" style="left:20px;top:26px;">Лимит</div>
<div class="t" style="left:223px;top:26px;">Технический отчет</div>
<div class="t" style="left:423px;top:11px;line-height:14.600px">Количество дней<br>действия<br>лимита в году</div>
<div class="a" style="left:573px;top:3px;width:47px;height:62px;overflow:hidden"><div class="t" style="left:0;top:0">Фактически<br>размещено<br>срока действия<br>лимита</div></div>
<div class="a" style="left:0;top:67px;width:621px;height:19px;background:#edf3fd"></div>
<div class="hl" style="left:0;top:86px;width:622px"></div>
<div class="vl" style="left:16px;top:67px;height:20px"></div>
<div class="vl" style="left:418px;top:67px;height:20px"></div>
<div class="vl" style="left:568px;top:67px;height:20px"></div>
<div class="a" style="left:216px;top:67px;width:3px;height:20px;border-left:1px solid #c5d5ee;border-right:1px solid #c5d5ee;background:#fff"></div>
<div class="a" style="left:6px;top:73px;width:0;height:0;border-top:4px solid transparent;border-bottom:4px solid transparent;border-left:4px solid #8aa4d0"></div>
<div class="t" style="left:20px;top:70px;">Лимит № 20507, от 26.10.2017</div>
<div class="t" style="left:520px;width:44px;text-align:right;top:70px">67</div>
<div class="a" style="left:622px;top:67px;width:17px;height:323px;background:#f0f0f0;border-left:1px solid #e4e4e4"></div>
<div class="tri" style="left:626px;top:73px;border-bottom:5px solid #c2c8d4"></div>
<div class="tri" style="left:626px;top:379px;border-top:5px solid #c2c8d4"></div>
<div class="a" style="left:0;top:390px;width:638px;height:17px;background:#f0f0f0"></div>
<div class="a" style="left:17px;top:391px;width:152px;height:15px;border:1px solid #7e8aa6;border-radius:2px;background:linear-gradient(#e9ecf2 0%,#dfe3ec 45%,#c3cbdb 50%,#cfd6e3 100%)"></div>
<div class="a" style="left:90px;top:395px;width:7px;height:7px;background:repeating-linear-gradient(90deg,#4a5878 0 1px,transparent 1px 2px)"></div>
<div class="a" style="left:6px;top:394px;width:0;height:0;border-top:4px solid transparent;border-bottom:4px solid transparent;border-right:5px solid #2e3c5c"></div>
<div class="a" style="left:610px;top:394px;width:0;height:0;border-top:4px solid transparent;border-bottom:4px solid transparent;border-left:5px solid #2e3c5c"></div>
</div>
<div class="btn" style="left:757px;top:828px;width:40px;height:26px;border-color:#a5b9d6;border-radius:3px;background:linear-gradient(#f6f9fe 0%,#eaf1fb 49%,#d5e2f3 51%,#e0eaf7 100%)"><svg class="a" style="left:11px;top:6px" width="16" height="12" viewBox="0 0 16 12"><defs><linearGradient id="ga" x1="0" y1="0" x2="0" y2="1"><stop offset="0" stop-color="#9adcf0"/><stop offset=".5" stop-color="#5cbce0"/><stop offset="1" stop-color="#3aa4cc"/></linearGradient></defs><path d="M.300 6L7.500.300v2.900H15.500v5.600H7.500v2.900z" fill="url(#ga)"/></svg></div>
<div class="btn" style="left:802px;top:828px;width:40px;height:26px;border-color:#a5b9d6;border-radius:3px;background:linear-gradient(#f6f9fe 0%,#eaf1fb 49%,#d5e2f3 51%,#e0eaf7 100%)"><svg class="a" style="left:11px;top:6px" width="16" height="12" viewBox="0 0 16 12"><defs><linearGradient id="ga" x1="0" y1="0" x2="0" y2="1"><stop offset="0" stop-color="#9adcf0"/><stop offset=".5" stop-color="#5cbce0"/><stop offset="1" stop-color="#3aa4cc"/></linearGradient></defs><path d="M15.700 6L8.500.300v2.900H.5v5.600H8.500v2.900z" fill="url(#ga)"/></svg></div>
<div class="t" style="left:847px;top:825px;">3 из 10</div>
<div class="btn" style="left:1201px;top:831px;width:100px;height:25px;border-color:#ccd6e6;background:linear-gradient(#fafbfd 0%,#f2f5fa 48%,#e9eef6 52%,#f0f3f9 100%)"></div>
<svg class="a" style="left:1229px;top:836px" width="18" height="16" viewBox="0 0 18 16"><path d="M.800 8.300l3.400-2.800 3.200 3.800L14.500.800l2.700 2.200-9.500 12.200z" fill="#9ee09a"/></svg>
<div class="t" style="left:1254px;top:836px;color:#a0a0a0">OK</div>
<div class="btn" style="left:1321px;top:831px;width:100px;height:25px;border-color:#6f8fc4"></div>
<svg class="a" style="left:1336px;top:834px" width="19" height="19" viewBox="0 0 19 19"><path d="M6 .500h7l5.500 5.500v7L13 18.500H6L.500 13V6z" fill="#d8201c" stroke="#a01410" stroke-width=".8"/><path d="M6 6l7 7M13 6l-7 7" stroke="#fff" stroke-width="2.600" stroke-linecap="round"/></svg>
<div class="t" style="left:1360px;top:836px;">Отмена</div>
<div class="a" style="left:0px;top:1040px;width:1920px;height:40px;background:#0b1117"></div>
<div class="a" style="left:294px;top:1040px;width:48px;height:40px;background:#3a4148"></div>
<div class="a" style="left:249px;top:1078px;width:40px;height:2px;background:#86d8ee"></div>
<div class="a" style="left:294px;top:1078px;width:48px;height:2px;background:#86d8ee"></div>
<div class="a" style="left:347px;top:1078px;width:40px;height:2px;background:#86d8ee"></div>
<div class="a" style="left:1915px;top:1040px;width:1px;height:40px;background:#4a4f55"></div>
<svg class="a" style="left:0;top:1040px" width="400" height="40" viewBox="0 0 400 40"><path d="M16 14.300l6.600-.9v6.200H16zM23.400 13.300L32 12v7.600h-8.600zM16 20.400h6.600v6.200l-6.600-.9zM23.400 20.400H32V28l-8.600-1.300z" fill="#fff"/><circle cx="74.500" cy="16.500" r="5" fill="none" stroke="#fff" stroke-width="1.500"/><path d="M71 20.500l-6.500 7" stroke="#fff" stroke-width="1.500"/><rect x="114.500" y="12.500" width="11" height="14" fill="none" stroke="#fff" stroke-width="1.300"/><path d="M112 14.500h-1.500v10h1.500M128 14.500h1.500v10h-1.500" fill="none" stroke="#fff" stroke-width="1.300"/><path d="M160 11h8l2 2h12v15h-22z" fill="#f5c84c"/><path d="M160 14h22v14h-22z" fill="#fbe08c"/><path d="M165 21h12v7h-12z" fill="#3a9ae8"/><path d="M168 24h6v4h-6z" fill="#fbe08c"/><circle cx="220" cy="20" r="11" fill="#f2f2f2"/><path d="M214.500 12.500l5.500 8 5.500-8M220 20v8.500" stroke="#e8231c" stroke-width="2.200" fill="none"/><ellipse cx="269" cy="20" rx="11" ry="11.500" fill="#e81828"/><ellipse cx="269" cy="20" rx="4.800" ry="8.500" fill="#0b1117"/><g transform="translate(306,7) scale(1.45)"><path d="M7.300 10h2.400l.4 4.200 1.600 1.600H5.300l1.600-1.600z" fill="#c47a1c"/><circle cx="8.500" cy="5.600" r="4.600" fill="#4db31f"/><circle cx="4.600" cy="7.800" r="3.300" fill="#43a81a"/><circle cx="12.400" cy="7.800" r="3.300" fill="#43a81a"/><circle cx="7" cy="4.600" r="2.600" fill="#7ad63a" opacity=".8"/></g><path d="M358 11l12-3v24l-12-3z" fill="#dcebd6" stroke="#6aa86a" stroke-width=".6"/><rect x="366" y="11" width="12" height="17" fill="#e6f2e2" stroke="#6aa86a" stroke-width=".8"/><path d="M366 15.500h12M366 19.500h12M366 23.500h12M372 11v17" stroke="#6aa86a" stroke-width=".8"/><path d="M360.500 15.500l6 9M366.500 15.500l-6 9" stroke="#2f8a3c" stroke-width="2"/></svg>
<svg class="a" style="left:1650px;top:1040px" width="270" height="40" viewBox="1650 0 270 40"><g fill="none" stroke="#fff" stroke-width="1.200"><circle cx="1672.500" cy="14.500" r="2.700"/><circle cx="1666.500" cy="20" r="2.700"/><path d="M1662 29c.5-4 2.500-6 4.500-6s4 2 4.500 6M1671 23c1-3 5-3 6 1"/><path d="M1699.500 25l6-6 6 6" stroke-width="1.500"/><path d="M1721 17.500h3l4-4v13l-4-4h-3z"/><path d="M1730.500 16.500c1.500 2 1.500 5 0 7M1733 14.500c2.500 3 2.500 8 0 11M1735.500 12.500c3.500 4 3.500 11 0 15"/></g><g fill="none" stroke="#8a8f95" stroke-width="1.200"><path d="M1749 27c0-7 5-12 12-12M1752.500 27c0-5 3.500-8.500 8.500-8.500"/></g><path d="M1756 27c0-2.800 2.200-5 5-5" fill="none" stroke="#fff" stroke-width="1.200"/><circle cx="1759.500" cy="26" r="1.500" fill="#fff"/><path d="M1880.500 11.500h16v12h-9l-4 4v-4h-3z" fill="#fff"/><path d="M1883 14.500h11M1883 17.500h11M1883 20.500h8" stroke="#0b1117" stroke-width="1"/><circle cx="1894.500" cy="27.200" r="7.800" fill="#33383e" stroke="#0b1117" stroke-width="1"/></svg>
<div class="t" style="left:1772px;top:1052px;color:#fff;font-size:11.5px;letter-spacing:-.3px">РУС</div>
<div class="t" style="left:1807px;width:56px;text-align:center;top:1044px;color:#fff;font-size:11.5px;letter-spacing:-.5px">15:57</div>
<div class="t" style="left:1800px;width:70px;text-align:center;top:1062px;color:#fff;font-size:11.5px;letter-spacing:-.4px">28.02.2018</div>
<div class="t" style="left:1891px;top:1059.500px;color:#fff;font-size:12px;font-weight:bold">1</div>
</body></html>
